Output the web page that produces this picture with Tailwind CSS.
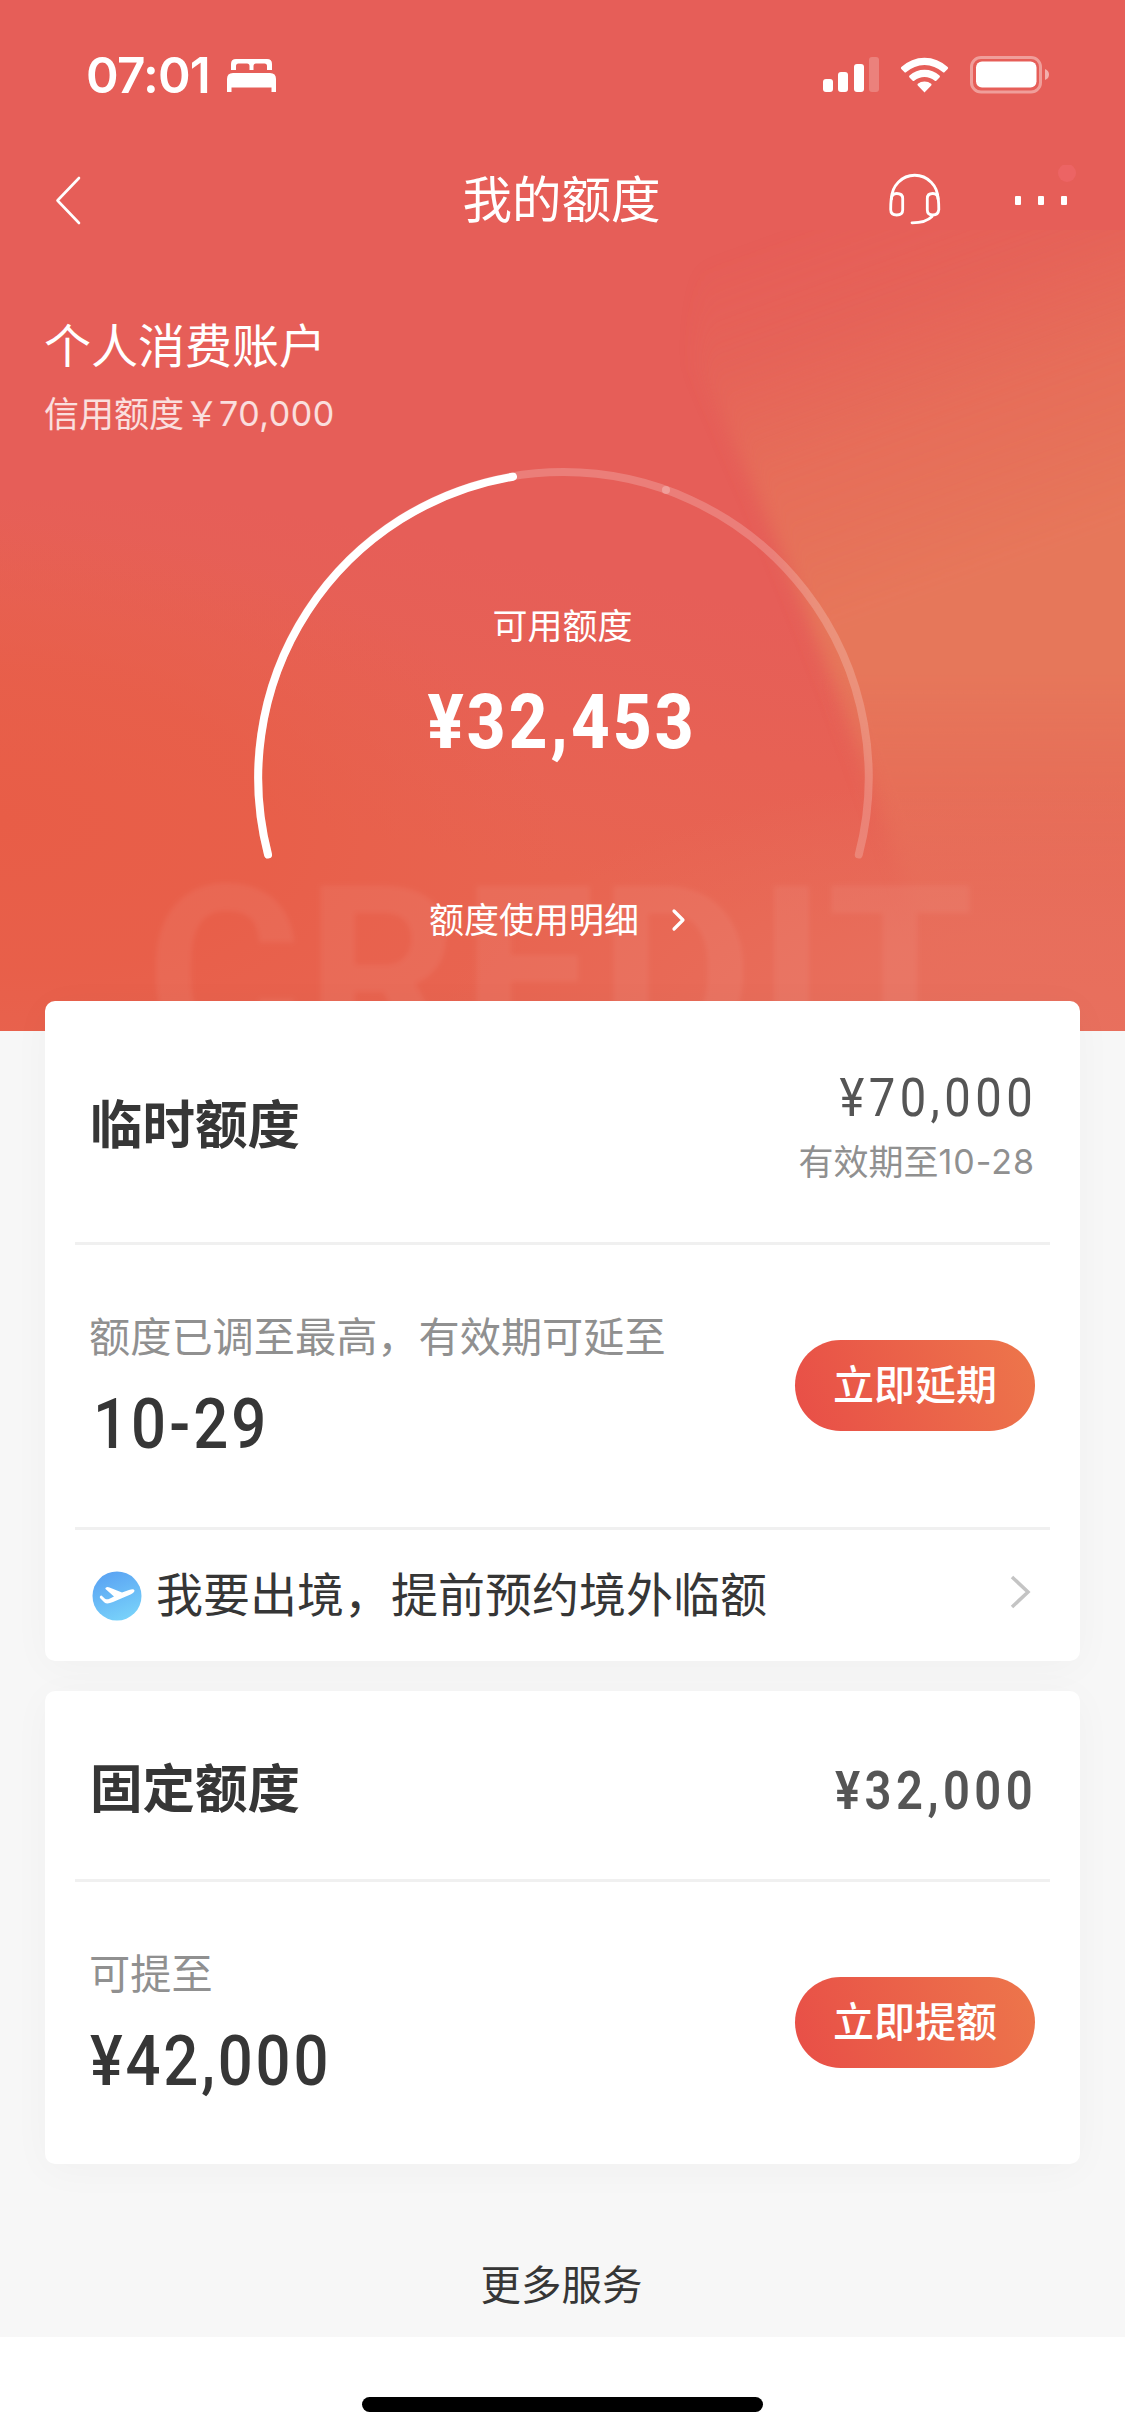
<!DOCTYPE html>
<html lang="zh-CN">
<head>
<meta charset="utf-8">
<title>我的额度</title>
<script src="https://cdn.jsdelivr.net/npm/@tailwindcss/browser@4"></script>
</head>
<body class="w-[1125px] bg-white font-['Noto_Sans_CJK_SC',sans-serif] text-[#363636]">
<main class="h-[2337px] bg-[#f7f7f7]">
  <header class="relative h-[1031px] overflow-hidden bg-[#e65e58] text-white">
    <!-- backdrop -->
    <svg class="absolute inset-0" width="1125" height="1031" viewBox="0 0 1125 1031">
      <defs>
        <linearGradient id="low" gradientUnits="userSpaceOnUse" x1="540" y1="560" x2="480" y2="860">
          <stop offset="0" stop-color="#e86450" stop-opacity="0"/><stop offset="1" stop-color="#e86450"/>
        </linearGradient>
        <radialGradient id="left" gradientUnits="userSpaceOnUse" cx="0" cy="0" r="1" gradientTransform="translate(0 820) rotate(4) scale(560 300)">
          <stop offset="0" stop-color="#e85d47"/><stop offset=".5" stop-color="#e85d47" stop-opacity=".7"/><stop offset="1" stop-color="#e85f4a" stop-opacity="0"/>
        </radialGradient>
        <linearGradient id="right" gradientUnits="userSpaceOnUse" x1="860" y1="210" x2="990" y2="570">
          <stop offset="0" stop-color="#e6775a" stop-opacity="0"/><stop offset=".25" stop-color="#e6755a" stop-opacity=".2"/><stop offset=".55" stop-color="#e6755a" stop-opacity=".65"/><stop offset="1" stop-color="#e6775a"/>
        </linearGradient>
        <radialGradient id="corner" gradientUnits="userSpaceOnUse" cx="0" cy="0" r="1" gradientTransform="translate(1060 1031) scale(620 260)">
          <stop offset="0" stop-color="#e8705e"/><stop offset=".4" stop-color="#e8705e" stop-opacity=".8"/><stop offset="1" stop-color="#e8705e" stop-opacity="0"/>
        </radialGradient>
        <linearGradient id="fade" x1="0" y1="0" x2="0" y2="1">
          <stop offset=".55" stop-color="#fff"/><stop offset=".95" stop-color="#000"/>
        </linearGradient>
        <mask id="m"><rect y="230" width="1125" height="801" fill="url(#fade)"/></mask>
        <filter id="soft" x="-20%" y="-20%" width="140%" height="140%"><feGaussianBlur stdDeviation="9"/></filter>
        <filter id="haze" x="-5%" y="-20%" width="110%" height="140%"><feGaussianBlur stdDeviation="2.500"/></filter>
      </defs>
      <rect y="500" width="1125" height="531" fill="url(#low)"/>
      <rect y="400" width="700" height="631" fill="url(#left)"/>
      <g mask="url(#m)"><path d="M720 150H1200V1100H980L862 760Q790 560 700 370Q690 330 720 150Z" fill="url(#right)" filter="url(#soft)"/></g>
      <rect x="400" y="740" width="725" height="291" fill="url(#corner)"/>
      <text x="146" y="1055" textLength="828" lengthAdjust="spacing" fill="#fff" fill-opacity=".055" filter="url(#haze)" class="font-[Roboto,sans-serif] text-[238px] font-bold">CREDIT</text>
    </svg>

    <div class="relative flex h-[150px] items-center pl-[86px] pr-[75px]">
      <span class="w-[126px] font-[Inter,sans-serif] text-[49.500px] leading-[60px] font-semibold tracking-[-0.800px]">07:01</span>
      <svg class="ml-auto" width="823" height="60" viewBox="227 45 823 60" fill="#fff">
        <path d="M231 70V64q0-5 5-5h31q5 0 5 5v6h-5v-4q0-2.500-2.500-2.500h-8.500q-2.500 0-2.500 2.500v4h-4v-4q0-2.500-2.500-2.500h-8.500q-2.500 0-2.500 2.500v4z"/>
        <path d="M227 79q0-6 6-6h37q6 0 6 6v13h-4.500v-4.500h-40V92H227z"/>
        <rect x="823" y="79" width="10" height="13" rx="3"/>
        <rect x="838" y="72" width="10" height="20" rx="3"/>
        <rect x="854" y="64" width="10" height="28" rx="3"/>
        <rect x="869" y="57" width="10" height="35" rx="3" opacity=".22"/>
        <path d="M901.300 67a34 34 0 0 1 46.400 0q1 1 0 2l-3 3q-1 1-2 0a27.500 27.500 0 0 0-36.400 0q-1 1-2 0l-3-3q-1-1 0-2z"/>
        <path d="M909.500 75.500a22.500 22.500 0 0 1 30 0q1 1 0 2l-3 3q-1 1-2 0a15.800 15.800 0 0 0-20 0q-1 1-2 0l-3-3q-1-1 0-2z"/>
        <path d="M917.800 83.800a10.500 10.500 0 0 1 13.400 0q.8.900 0 1.800L924.500 92.500l-6.700-6.900q-.8-.9 0-1.800z"/>
        <rect x="971.500" y="57.500" width="69" height="34.500" rx="9.500" fill="none" stroke="#fff" stroke-opacity=".4" stroke-width="3"/>
        <rect x="976" y="61.500" width="60.500" height="26" rx="6"/>
        <path d="M1045 69q4 1.500 4 5.500t-4 5.500z" opacity=".5"/>
      </svg>
    </div>

    <nav class="relative flex h-[100px] items-center justify-between pl-[55px] pr-[45px]">
      <svg width="186" height="60" viewBox="55 170 186 60" fill="none" stroke="#fff" stroke-width="2.600" stroke-linecap="round" stroke-linejoin="round"><path d="M79 178L57.500 200.500L79 223"/></svg>
      <h1 class="-mt-[7px] -ml-[2px] text-[49.500px] leading-[60px] font-normal">我的额度</h1>
      <svg width="196" height="70" viewBox="884 165 196 70" fill="none" stroke="#fff" stroke-width="2.800" stroke-linecap="round">
        <path d="M891.500 199a23 23.500 0 0 1 46.500 0"/>
        <path d="M891.200 199q.5-5.500 5.500-5.500q6 0 6 5v11.500q0 5-6 5t-6-5.500q0-6 .5-10.500z"/>
        <path d="M938.300 199q-.5-5.500-5.500-5.500q-5.500 0-5.500 5v11.500q0 5 5.500 5t6-5.500q0-6-.5-10.500z"/>
        <path d="M932 216.500q-6 6.300-20 6.300"/>
        <g fill="#fff" stroke="none"><rect x="1015" y="196" width="6" height="9" rx="1"/><rect x="1038" y="196" width="6" height="9" rx="1"/><rect x="1061" y="196" width="6" height="9" rx="1"/><circle cx="1067" cy="173" r="9" fill="#ec6464"/></g>
      </svg>
    </nav>

    <section class="relative pl-[44px] pt-[63px]">
      <h2 class="text-[47px] leading-[60px] font-normal">个人消费账户</h2>
      <p class="mt-[17px] flex text-[35px] leading-[44px] text-white/80">信用额度￥<span class="mt-[2px] font-[Inter,sans-serif] text-[34px] tracking-[0.500px]">70,000</span></p>
    </section>

    <svg class="absolute left-[244px] top-[458px]" width="640" height="412" viewBox="244 458 640 412" fill="none" stroke="#fff" stroke-width="8" stroke-linecap="round">
      <path d="M268 854.500A305.300 305.300 0 1 1 858.800 854.500" stroke-opacity=".2"/>
      <path d="M268 854.500A305.300 305.300 0 0 1 513 476.700"/>
      <circle cx="666" cy="490" r="4" fill="#fff" fill-opacity=".25" stroke="none"/>
    </svg>

    <section class="relative flex flex-col items-center pt-[163px]">
      <p class="text-[35px] leading-[50px]">可用额度</p>
      <p class="mt-[28px] font-[Roboto,sans-serif] text-[76px] leading-[90px] font-extrabold tracking-[3.5px]"><span class="inline-block scale-x-[.885]">¥32,453</span></p>
      <p class="mt-[126px] -ml-[9px] flex items-center gap-[32px] text-[35px] leading-[50px]">额度使用明细
        <svg class="mt-[3px]" width="16" height="26" viewBox="0 0 16 26" fill="none" stroke="#fff" stroke-width="3.200" stroke-linecap="round" stroke-linejoin="round"><path d="M3 4L12 13L3 22"/></svg>
      </p>
    </section>
  </header>

  <section class="relative mx-[45px] -mt-[30px] h-[660px] rounded-[10px] bg-white shadow-[0_6px_40px_rgba(0,0,0,0.03)]">
    <div class="mx-[30px] flex h-[244px] justify-between border-b-[3px] border-[#f0f0f0] pl-[15px] pr-[16px]">
      <h3 class="mt-[90px] text-[52.500px] leading-[60px] font-bold">临时额度</h3>
      <div class="flex flex-col items-end pt-[67px]">
        <p class="-mr-[3px] origin-right scale-x-[.89] font-[Roboto,sans-serif] text-[53px] leading-[60px] tracking-[5px] text-[#555]">¥70,000</p>
        <p class="mt-[7px] -mr-[1px] flex text-[35px] leading-[50px] text-[#909090]">有效期至<span class="mt-[2px] font-[Inter,sans-serif] text-[34px] tracking-[1px]">10-28</span></p>
      </div>
    </div>
    <div class="mx-[30px] flex h-[285px] justify-between border-b-[3px] border-[#f0f0f0] pl-[14px] pr-[15px]">
      <div class="pt-[64px]">
        <p class="text-[41.200px] leading-[50px] text-[#909090]">额度已调至最高，有效期可延至</p>
        <p class="mt-[25px] ml-[4px] origin-left scale-x-[.88] font-[Roboto,sans-serif] text-[70px] leading-[80px] font-medium tracking-[3.500px]">10-29</p>
      </div>
      <button class="mt-[95px] flex h-[91px] w-[240px] justify-center rounded-full bg-linear-[70deg,#e84e47,#ed764b] pt-[17px] text-[41px] leading-[50px] font-medium text-white">立即延期</button>
    </div>
    <a class="flex h-[131px] items-center pl-[47px] pr-[49px]">
      <svg width="50" height="50" viewBox="0 0 50 50"><defs><linearGradient id="sky" x1=".3" y1="0" x2=".7" y2="1"><stop offset="0" stop-color="#5aa3f3"/><stop offset="1" stop-color="#79d3fa"/></linearGradient></defs><circle cx="25" cy="25" r="24.500" fill="url(#sky)"/><path d="M14 16.500q1.500-1.200 3.500 0L30 21.500l7-2.500q5-1.500 5.500.5q0 2-4 4L21 31q-6 2.500-8.500.5L8 27q-.8-2 1.500-2.500l3.500 3.200q2 1 4.500 0l4.500-2.200L13.500 18q-.5-1 .5-1.500z" fill="#fff"/></svg>
      <span class="-mt-[8px] ml-[14px] text-[47px] leading-[60px]">我要出境，提前预约境外临额</span>
      <svg class="mb-[8px] ml-auto" width="22" height="36" viewBox="0 0 22 36" fill="none" stroke="#c4c4c4" stroke-width="3.500"><path d="M3 3L19 18L3 33"/></svg>
    </a>
  </section>

  <section class="relative mx-[45px] mt-[30px] h-[473px] rounded-[10px] bg-white shadow-[0_6px_40px_rgba(0,0,0,0.03)]">
    <div class="mx-[30px] flex h-[191px] justify-between border-b-[3px] border-[#f0f0f0] pl-[15px] pr-[16px]">
      <h3 class="mt-[64px] text-[52.500px] leading-[60px] font-bold">固定额度</h3>
      <p class="mt-[70px] -mr-[3px] origin-right scale-x-[.89] font-[Roboto,sans-serif] text-[53px] leading-[60px] font-semibold tracking-[5px] text-[#555]">¥32,000</p>
    </div>
    <div class="mx-[30px] flex justify-between pl-[14px] pr-[15px]">
      <div class="pt-[64px]">
        <p class="text-[41.200px] leading-[50px] text-[#909090]">可提至</p>
        <p class="mt-[25px] ml-[1px] origin-left scale-x-[.88] font-[Roboto,sans-serif] text-[70px] leading-[80px] font-medium tracking-[3.200px]">¥42,000</p>
      </div>
      <button class="mt-[95px] flex h-[91px] w-[240px] justify-center rounded-full bg-linear-[70deg,#e84e47,#ed764b] pt-[17px] text-[41px] leading-[50px] font-medium text-white">立即提额</button>
    </div>
  </section>

  <p class="mt-[94px] -ml-[2px] text-center text-[40.500px] leading-[50px]">更多服务</p>
</main>
<div class="mx-auto mt-[60px] h-[15px] w-[401px] rounded-full bg-black"></div>
</body>
</html>
